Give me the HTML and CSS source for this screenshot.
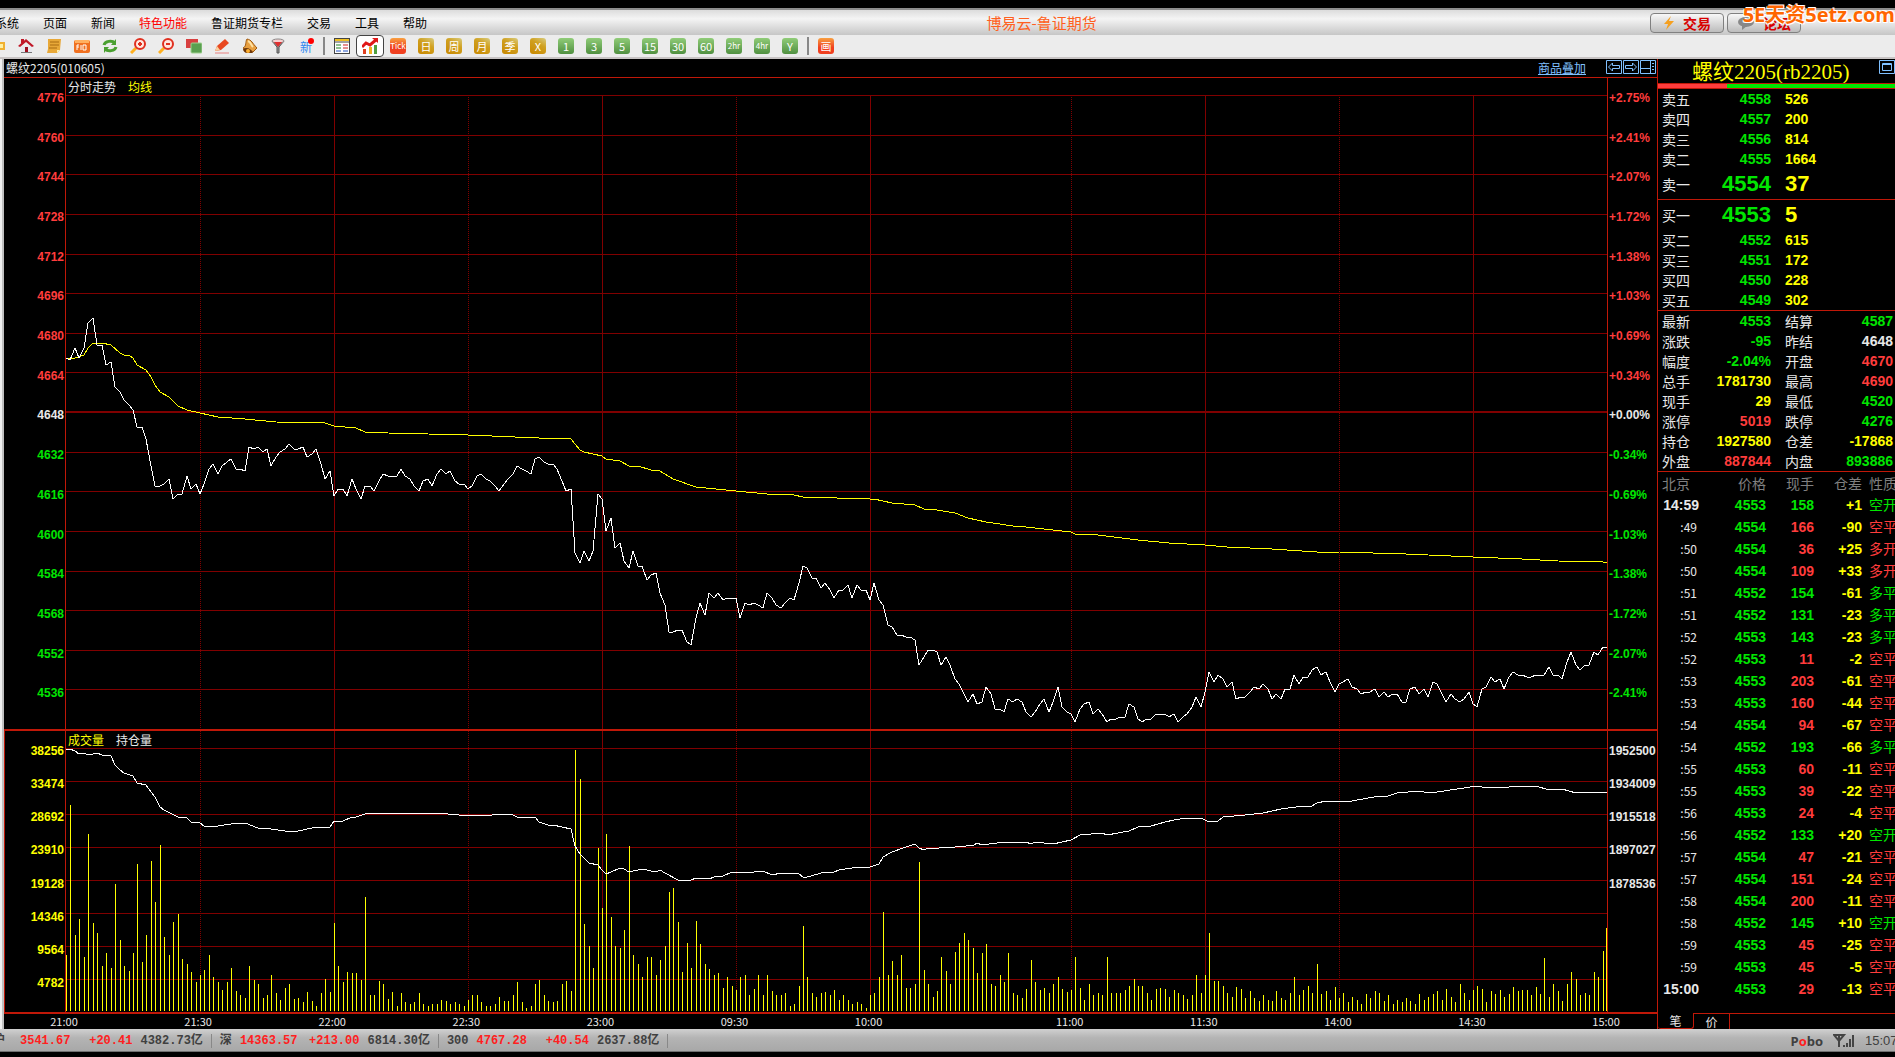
FILE: index.html
```html
<!DOCTYPE html>
<html lang="zh-CN">
<head>
  <meta charset="UTF-8">
  <meta name="viewport" content="width=device-width, initial-scale=1.0">
  <title>博易云-鲁证期货</title>
  <link rel="stylesheet" href="styles.css">
</head>
<body>
  <header class="menubar">
    <nav class="menu">
      <a href="#">系统</a>
      <a href="#">页面</a>
      <a href="#">新闻</a>
      <a href="#" class="hot">特色功能</a>
      <a href="#">鲁证期货专栏</a>
      <a href="#">交易</a>
      <a href="#">工具</a>
      <a href="#">帮助</a>
    </nav>
    <h1>博易云-鲁证期货</h1>
    <div class="menu-buttons">
      <button type="button">
        <svg width="12" height="16" viewBox="0 0 12 16"><path d="M8 1 1 9h4l-2 6 8-9H6z" fill="#f5a020"/></svg>
        交易
      </button>
      <button type="button">
        <svg width="18" height="14" viewBox="0 0 18 14"><ellipse cx="9" cy="6" rx="8" ry="5" fill="#888"/><path d="M5 9v5l5-4z" fill="#888"/></svg>
        论坛
      </button>
      <span class="watermark">5E天资5etz.com</span>
    </div>
  </header>

  <div class="toolbar">
    <button type="button" aria-label="打开"><svg viewBox="0 0 16 16"><path d="M1 4h14v8H1z" fill="#f0b030"/><path d="M2 6h11v4H2z" fill="#fff0a0"/></svg></button>
    <button type="button" aria-label="首页"><svg viewBox="0 0 16 16"><path d="M3 8h11v7H3z" fill="#e8e8ee"/><path d="M0 8 8 1l8 7-2 1-6-5-6 5z" fill="#c01828"/><path d="M3 1h3v4H3z" fill="#c01828"/><path d="M7 9h3v6H7z" fill="#a01020"/><path d="M3 14h11v1H3z" fill="#777"/></svg></button>
    <button type="button" aria-label="资讯"><svg viewBox="0 0 16 16"><path d="M2 1h13l-1 11-3 3H1l1-4z" fill="#e8a838"/><path d="M4 4h9M4 7h9M3 10h8" stroke="#a86a10"/><path d="m11 15 0-3 3 0z" fill="#fff0b0"/></svg></button>
    <button type="button" aria-label="F10"><svg viewBox="0 0 16 16"><rect x="0" y="2" width="16" height="13" rx="2" fill="#f07020"/><path d="M1 2h14v3H1z" fill="#ffb060"/><path d="M3 12V7h2M3 9h2M7 7v5M9 7h3v5H9z" stroke="#fff" fill="none"/></svg></button>
    <button type="button" aria-label="刷新"><svg viewBox="0 0 16 16"><path d="M2 7c1-4 8-5 11-2M14 9c-1 4-8 5-11 2" fill="none" stroke="#4aa030" stroke-width="3"/><path d="M14 1v6H9zM2 15V9h5z" fill="#4aa030"/></svg></button>
    <button type="button" aria-label="放大"><svg viewBox="0 0 16 16"><path d="M1 15l5-5" stroke="#ffb020" stroke-width="3"/><circle cx="10" cy="6" r="5" fill="#ffe8e0" stroke="#e03020" stroke-width="2"/><path d="M8 6h4M10 4v4" stroke="#e03020" stroke-width="2"/></svg></button>
    <button type="button" aria-label="缩小"><svg viewBox="0 0 16 16"><path d="M1 15l5-5" stroke="#ffb020" stroke-width="3"/><circle cx="10" cy="6" r="5" fill="#ffe8e0" stroke="#e03020" stroke-width="2"/><path d="M8 6h4" stroke="#e03020" stroke-width="2"/></svg></button>
    <button type="button" aria-label="叠加"><svg viewBox="0 0 16 16"><rect x="0" y="1" width="12" height="9" fill="#d84040"/><rect x="5" y="5" width="11" height="10" rx="1" fill="#5aa050" stroke="#a0d090"/></svg></button>
    <button type="button" aria-label="画线"><svg viewBox="0 0 16 16"><path d="m1 13 2-5 8-7 4 4-8 7z" fill="#e84820"/><path d="m1 13 2-5 3 4z" fill="#f8d0a0"/><path d="M1 15h14" stroke="#e88080"/></svg></button>
    <button type="button" aria-label="预警"><svg viewBox="0 0 16 16"><path d="M5 1c5 1 5 4 10 9l-4 4C8 11 2 12 1 10c4-2 2-6 4-9z" fill="#e8a040" stroke="#a05a10"/><path d="M6 3c3 1 3 4 5 6" fill="none" stroke="#ffe0a0" stroke-width="2"/><path d="M1 11c3-2 8-1 10 4H5c-2 0-4-2-4-4z" fill="#703808"/><circle cx="6" cy="13" r="2" fill="#ffb030"/></svg></button>
    <button type="button" aria-label="筛选"><svg viewBox="0 0 16 16"><path d="M2 3h12l-5 6v6H7V9z" fill="#999" stroke="#555"/><ellipse cx="8" cy="3" rx="6" ry="2" fill="#f8d0d0" stroke="#888"/><path d="M4 4h8L8 9z" fill="#e03030"/></svg></button>
    <button type="button" class="new">新<span class="dot"></span></button>
    <span class="sep"></span>
    <button type="button" aria-label="报价"><svg viewBox="0 0 16 16"><rect x="0.5" y="0.5" width="15" height="15" fill="#fff" stroke="#444"/><path d="M1 2h14" stroke="#f0c020" stroke-width="2"/><path d="M1 4h14" stroke="#444"/><path d="M2 7h5M2 10h5" stroke="#208020"/><path d="M2 13h5M9 13h5" stroke="#2050c0"/><path d="M9 7h5M9 10h5" stroke="#d02020"/></svg></button>
    <button type="button" class="active" aria-label="分时"><svg viewBox="0 0 16 16"><path d="M1 11h3v5H1z" fill="#e04020"/><path d="M7 9h3v7H7z" fill="#f0b020"/><path d="M12 7h3v9h-3z" fill="#50a040"/><path d="m0 9 4-4 4 2 7-6" fill="none" stroke="#e01818" stroke-width="3"/><path d="M10 0h6v5z" fill="#e01818"/></svg></button>
    <button type="button"><span class="chip red small">Tick</span></button>
    <button type="button"><span class="chip gold">日</span></button>
    <button type="button"><span class="chip gold">周</span></button>
    <button type="button"><span class="chip gold">月</span></button>
    <button type="button"><span class="chip gold">季</span></button>
    <button type="button"><span class="chip gold">X</span></button>
    <button type="button"><span class="chip green">1</span></button>
    <button type="button"><span class="chip green">3</span></button>
    <button type="button"><span class="chip green">5</span></button>
    <button type="button"><span class="chip green">15</span></button>
    <button type="button"><span class="chip green">30</span></button>
    <button type="button"><span class="chip green">60</span></button>
    <button type="button"><span class="chip green small">2hr</span></button>
    <button type="button"><span class="chip green small">4hr</span></button>
    <button type="button"><span class="chip green">Y</span></button>
    <span class="sep"></span>
    <button type="button"><span class="chip red">画</span></button>
  </div>

  <main>
    <div class="dock"></div>

    <section class="chart">
      <div class="chart-title">
        <span>螺纹2205(010605)</span>
        <a href="#" class="overlay-link">商品叠加</a>
        <button type="button" aria-label="向左"><svg viewBox="0 0 16 14"><path d="M.5 .5h15v13H.5zM2.500 7l4-4v2.500h7v3h-7V11z"/></svg></button>
        <button type="button" aria-label="向右"><svg viewBox="0 0 16 14"><path d="M.5 .5h15v13H.5zM13.500 7l-4-4v2.500h-7v3h7V11z"/></svg></button>
        <button type="button" aria-label="布局"><svg viewBox="0 0 16 14"><path d="M.5 .5h15v13H.5zM.5 8.500h10M10.500 .5v13M12 3.500h2M12 6.500h2M12 9.500h2"/></svg></button>
      </div>

      <div class="pane price-pane">
        <div class="axis left" id="priceAxis"></div>
        <div class="plot">
          <svg id="pricePlot"></svg>
          <div class="legend"><span>分时走势</span><span class="yellow">均线</span></div>
        </div>
        <div class="axis right" id="percentAxis"></div>
      </div>

      <div class="pane volume-pane">
        <div class="axis left yellow" id="volumeAxis"></div>
        <div class="plot">
          <svg id="volumePlot"></svg>
          <div class="legend"><span class="yellow">成交量</span><span>持仓量</span></div>
        </div>
        <div class="axis right" id="holdAxis"></div>
      </div>

      <div class="times" id="times"></div>
    </section>

    <aside class="panel">
      <div class="panel-title">
        <h2>螺纹2205(rb2205)</h2>
        <button type="button" aria-label="窗口"><svg viewBox="0 0 16 14"><path d="M.5 .5h15v13H.5zM3.500 3.500h9v7h-9zM3.500 4.500h9"/></svg></button>
      </div>
      <div class="ratio"><div class="ratio-buy"></div></div>

      <table class="depth">
        <tr><th>卖五</th><td>4558</td><td>526</td></tr>
        <tr><th>卖四</th><td>4557</td><td>200</td></tr>
        <tr><th>卖三</th><td>4556</td><td>814</td></tr>
        <tr><th>卖二</th><td>4555</td><td>1664</td></tr>
        <tr class="best"><th>卖一</th><td>4554</td><td>37</td></tr>
      </table>
      <table class="depth">
        <tr class="best"><th>买一</th><td>4553</td><td>5</td></tr>
        <tr><th>买二</th><td>4552</td><td>615</td></tr>
        <tr><th>买三</th><td>4551</td><td>172</td></tr>
        <tr><th>买四</th><td>4550</td><td>228</td></tr>
        <tr><th>买五</th><td>4549</td><td>302</td></tr>
      </table>
      <table class="quote">
        <tr><th>最新</th><td class="down">4553</td><th>结算</th><td class="down">4587</td></tr>
        <tr><th>涨跌</th><td class="down">-95</td><th>昨结</th><td>4648</td></tr>
        <tr><th>幅度</th><td class="down">-2.04%</td><th>开盘</th><td class="up">4670</td></tr>
        <tr><th>总手</th><td class="yellow">1781730</td><th>最高</th><td class="up">4690</td></tr>
        <tr><th>现手</th><td class="yellow">29</td><th>最低</th><td class="down">4520</td></tr>
        <tr><th>涨停</th><td class="up">5019</td><th>跌停</th><td class="down">4276</td></tr>
        <tr><th>持仓</th><td class="yellow">1927580</td><th>仓差</th><td class="yellow">-17868</td></tr>
        <tr><th>外盘</th><td class="up">887844</td><th>内盘</th><td class="down">893886</td></tr>
      </table>
      <table class="ticks">
        <thead>
          <tr><th>北京</th><th>价格</th><th>现手</th><th>仓差</th><th>性质</th></tr>
        </thead>
        <tbody id="ticks"></tbody>
      </table>
      <div class="tabs">
        <button type="button" class="active">笔</button>
        <button type="button">价</button>
      </div>
    </aside>
  </main>

  <footer class="status">
    <div class="index first"><span class="name">沪</span><span class="last">3541.67</span><span class="change">+20.41</span><span>4382.73亿</span></div>
    <div class="index"><span class="name">深</span><span class="last">14363.57</span><span class="change">+213.00</span><span>6814.30亿</span></div>
    <div class="index"><span class="name">300</span><span class="last">4767.28</span><span class="change">+40.54</span><span>2637.88亿</span></div>
    <div class="brand">P<em>o</em>bo</div>
    <svg class="signal" viewBox="0 0 22 14"><path d="M1 1h10L6 7zM6 1v12" fill="none" stroke="#444" stroke-width="2"/><path d="M10 11h2v2h-2zM13 9h2v4h-2zM16 5h2v8h-2zM19 1h2v12h-2z" fill="#444"/></svg>
    <div class="clock">15:07</div>
  </footer>

  <script src="chart.js"></script>
</body>
</html>
```
FILE: styles.css
```css
* {
  box-sizing: border-box;
}
body {
  margin: 0;
  height: 100vh;
  display: flex;
  flex-direction: column;
  padding: 8px 0 5px;
  overflow: hidden;
  background: #000;
  color: #e8e8e8;
  font-family: "Noto Sans CJK SC", sans-serif;
  font-size: 12px;
}
button {
  font: inherit;
  padding: 0;
  border: 0;
  background: none;
  cursor: pointer;
}
table {
  width: 100%;
  table-layout: fixed;
  border-collapse: collapse;
}
th, td {
  padding: 0;
}
.yellow { color: #ffff00; }
.up { color: #ff3c3c; }
.down { color: #00e600; }

/* menu bar */
.menubar {
  display: flex;
  align-items: center;
  flex: none;
  height: 27px;
  border-top: 2px solid #8c8c8c;
  background: linear-gradient(#dcdcdc, #f4f4f4 35%, #c6c6c6);
}
.menu {
  display: flex;
  gap: 24px;
  margin-left: -5px;
}
.menu a {
  color: #000;
  text-decoration: none;
}
.menu .hot {
  color: #ff0000;
}
.menubar h1 {
  flex: 1;
  margin: 0;
  padding-left: 6px;
  text-align: center;
  font-size: 15px;
  line-height: 20px;
  font-weight: normal;
  color: #ff6020;
}
.menu-buttons {
  position: relative;
  display: flex;
  gap: 3px;
  width: 245px;
}
.menu-buttons button {
  display: flex;
  align-items: center;
  justify-content: center;
  gap: 8px;
  width: 74px;
  height: 20px;
  border: 1px solid #808080;
  border-radius: 4px;
  background: linear-gradient(#f8f8f8, #bcbcbc);
  color: #d80000;
  font-size: 14px;
  font-weight: bold;
}
.watermark {
  position: absolute;
  right: 0;
  top: -12px;
  font: bold 20px/28px "Open Sans", "Noto Sans CJK SC", sans-serif;
  color: #ff6600;
  white-space: nowrap;
  text-shadow: 1px 1px 0 #fff, -1px 1px 0 #fff, 1px -1px 0 #fff;
}

/* toolbar */
.toolbar {
  display: flex;
  flex: none;
  height: 24px;
  margin-left: -16px;
  background: #ececec;
  border-bottom: 2px solid #c8c4c4;
}
.toolbar button {
  display: flex;
  align-items: center;
  justify-content: center;
  flex: none;
  width: 28px;
}
.toolbar svg {
  width: 16px;
  height: 16px;
}
.toolbar .active {
  border: 1px solid #444;
  border-radius: 4px;
  background: #fff;
}
.toolbar .new {
  position: relative;
  color: #3088f0;
}
.dot {
  position: absolute;
  right: 6px;
  top: 3px;
  width: 6px;
  height: 6px;
  border-radius: 50%;
  background: #ff0000;
}
.sep {
  width: 2px;
  margin: 2px 3px;
  background: #888;
}
.chip {
  width: 16px;
  height: 16px;
  border-radius: 3px;
  color: #fff;
  font-size: 11px;
  line-height: 16px;
  text-align: center;
}
.chip.small {
  font-size: 8px;
}
.gold { background: linear-gradient(30deg, #c88800, #d0a020 60%, #d8cc80); }
.green { background: linear-gradient(#90cc78, #509040); }
.red { background: linear-gradient(#f8a040, #f04020 60%); }

main {
  flex: 1;
  min-height: 0;
  display: grid;
  grid-template-columns: 4px 1fr 238px;
}
.dock {
  background: linear-gradient(90deg, #f0f0f0 50%, #c0c0c0 50%);
}

/* charts */
.chart {
  display: flex;
  flex-direction: column;
  min-width: 0;
  min-height: 0;
}
.chart-title {
  display: flex;
  align-items: center;
  flex: none;
  height: 19px;
  padding: 0 1px 2px 2px;
  border-bottom: 1px solid #c01808;
}
.overlay-link {
  margin-left: auto;
  margin-right: 19px;
  color: #80c0ff;
}
.chart-title button, .panel-title button {
  width: 16px;
  height: 14px;
  margin-left: 1px;
}
.chart-title svg, .panel-title svg {
  display: block;
  fill: none;
  stroke: #80c0ff;
}
.pane {
  display: grid;
  grid-template-columns: 62px 1fr 50px;
  min-height: 0;
}
.price-pane {
  flex: 654;
  border-bottom: 2px solid #c01808;
}
.volume-pane {
  flex: 282;
  border-left: 1px solid #c01808;
  border-bottom: 2px solid #c01808;
  grid-template-columns: 61px 1fr 50px;
}
.axis {
  display: flex;
  flex-direction: column;
  font: bold 12px/14px "Liberation Sans", sans-serif;
}
.axis span {
  flex: 1;
  display: flex;
  align-items: center;
}
.axis.left {
  text-align: right;
  border-right: 1px solid #c01808;
}
.axis.left span {
  justify-content: flex-end;
  padding-right: 1px;
}
.axis.right {
  border-left: 1px solid #c01808;
}
.axis.right span {
  padding-left: 1px;
}
.price-pane .axis {
  padding-bottom: 16px;
}
.volume-pane .axis {
  padding: 3px 0 12px;
}
.plot {
  position: relative;
  min-width: 0;
  min-height: 0;
  overflow: hidden;
}
.plot svg {
  position: absolute;
  width: 100%;
  height: 100%;
  shape-rendering: crispEdges;
}
.plot polyline {
  fill: none;
  stroke: #fff;
}
.plot .average, .plot .bars {
  fill: none;
  stroke: #ffff00;
}
.plot .grid {
  stroke: #800000;
}
.plot .base {
  stroke-width: 2px;
}
.plot .half {
  stroke-dasharray: 1 1;
}
.legend {
  position: relative;
  display: flex;
  gap: 12px;
  padding-left: 2px;
  line-height: 17px;
}
.times {
  display: flex;
  flex: none;
  height: 15px;
  padding: 0 51px 0 60px;
  font-size: 11px;
  line-height: 15px;
}
.times span {
  width: 0;
  display: flex;
  justify-content: center;
}

/* quote panel */
.panel {
  display: flex;
  flex-direction: column;
  min-width: 0;
  overflow: hidden;
  border-left: 1px solid #c01808;
}
.panel-title {
  display: flex;
  justify-content: space-between;
  flex: none;
  height: 24px;
  padding: 1px 0 0 34px;
}
.panel-title h2 {
  margin: 0;
  font: 21px/24px "Liberation Serif", "Noto Sans CJK SC", serif;
  color: #ffff00;
}
.ratio {
  flex: none;
  height: 6px;
  border-top: 1px solid #c01808;
  border-bottom: 1px solid #c01808;
  background: #00e600;
}
.ratio-buy {
  width: 29%;
  height: 4px;
  background: #ff3c3c;
}
.panel table {
  flex: none;
  font: bold 14px/20px "Liberation Sans", "Noto Sans CJK SC", sans-serif;
}
.panel th {
  font: 14px/20px "Noto Sans CJK SC", sans-serif;
  text-align: left;
  white-space: nowrap;
}
.panel tr {
  height: 20px;
}
.depth, .quote {
  border-bottom: 1px solid #c01808;
}
.depth th, .quote th:first-child {
  width: 48px;
  padding-left: 4px;
}
.depth td:nth-child(2) {
  width: 65px;
  text-align: right;
  color: #00e600;
}
.depth td:nth-child(3) {
  padding-left: 14px;
  color: #ffff00;
}
.panel .best {
  height: 30px;
}
.best td {
  font-size: 22px;
}
.quote td {
  text-align: right;
}
.quote td:nth-child(2) {
  width: 65px;
}
.quote th:nth-child(3) {
  width: 48px;
  padding-left: 14px;
}
.quote td:nth-child(4) {
  padding-right: 2px;
}
.ticks tr {
  height: 22px;
}
.ticks th, .ticks td {
  width: 48px;
  text-align: right;
}
.ticks th {
  color: #808080;
}
.ticks th:first-child {
  width: 41px;
  padding-left: 4px;
  text-align: left;
}
.ticks th:nth-child(2) {
  width: 67px;
}
.ticks th:nth-child(5), .ticks td:nth-child(5) {
  width: 34px;
  padding-left: 7px;
  text-align: left;
  font-weight: normal;
  white-space: nowrap;
}
.ticks .second {
  padding-right: 2px;
  font: 12px/20px "Noto Sans CJK SC", sans-serif;
}
.tabs {
  display: flex;
  flex: none;
  margin-top: auto;
  height: 16px;
}
.tabs::after {
  content: "";
  flex: 1;
  border-top: 1px solid #c01808;
}
.tabs button {
  width: 36px;
  border-top: 1px solid #c01808;
  border-right: 1px solid #c01808;
  color: #e8e8e8;
  line-height: 14px;
}
.tabs .active {
  border-top: 0;
  border-bottom: 1px solid #c01808;
  border-radius: 0 0 3px 3px;
}

/* status bar */
.status {
  display: flex;
  align-items: center;
  flex: none;
  height: 23px;
  padding-top: 2px;
  border-bottom: 1px solid #707070;
  background: linear-gradient(#d0d0d0, #b4b4b4 40%, #a8a8a8);
  color: #404040;
  font: bold 12px/20px "Liberation Mono", "Noto Sans CJK SC", monospace;
}
.index {
  display: flex;
  padding: 0 8px;
  border-right: 1px solid #888;
  line-height: 14px;
}
.index.first {
  padding-left: 0;
  margin-left: -7px;
}
.name {
  min-width: 12px;
  margin-right: 8px;
}
.first .name {
  margin-right: 15px;
}
.last, .change {
  color: #ff2020;
}
.change {
  width: 62px;
  margin-right: 8px;
  text-align: right;
}
.brand {
  margin-left: auto;
  font-family: "Open Sans", sans-serif;
  font-size: 13px;
}
.brand em {
  font-style: normal;
  color: #ff2020;
}
.signal {
  width: 22px;
  height: 14px;
  margin: 0 10px;
}
.clock {
  width: 30px;
  overflow: hidden;
  font: 13px/20px "Liberation Sans", sans-serif;
}
```
FILE: chart.js
```javascript
// one price per traded minute, 21:00 to 15:00
const prices = [
  4670,4669,4674,4670,4674,4684,4686,4675,4675,4667,4668,4658,4656,4653,4651,4649,4642,4642,4637,4626,
  4618,4618,4619,4621,4613,4615,4615,4622,4617,4619,4615,4619,4625,4627,4623,4626,4628,4629,4625,4625,
  4624,4634,4633,4634,4632,4633,4626,4630,4632,4633,4635,4633,4633,4634,4630,4631,4633,4627,4621,4624,
  4614,4617,4617,4614,4621,4617,4613,4618,4618,4616,4620,4623,4622,4622,4622,4625,4622,4621,4618,4616,
  4620,4621,4618,4623,4625,4623,4624,4620,4619,4619,4617,4618,4622,4623,4621,4620,4618,4616,4619,4621,
  4623,4626,4625,4624,4623,4629,4630,4628,4627,4627,4625,4620,4616,4617,4591,4587,4592,4588,4592,4615,
  4613,4600,4605,4593,4595,4588,4585,4592,4586,4586,4580,4582,4583,4575,4570,4559,4559,4560,4560,4555,
  4554,4565,4571,4566,4575,4573,4575,4572,4573,4573,4573,4565,4571,4570,4571,4570,4569,4575,4573,4570,
  4569,4571,4573,4572,4579,4586,4585,4581,4581,4577,4579,4576,4573,4576,4576,4578,4573,4578,4576,4576,
  4572,4579,4572,4570,4562,4561,4558,4558,4557,4557,4556,4546,4549,4552,4552,4551,4546,4549,4546,4540,
  4538,4534,4531,4534,4530,4531,4537,4534,4528,4528,4527,4532,4531,4532,4531,4527,4525,4527,4530,4532,
  4527,4531,4537,4529,4527,4526,4523,4528,4530,4531,4526,4528,4526,4523,4524,4524,4525,4525,4530,4529,
  4524,4523,4524,4524,4526,4526,4526,4525,4526,4523,4525,4526,4529,4533,4529,4535,4543,4539,4542,4540,
  4537,4539,4532,4533,4533,4535,4537,4536,4538,4536,4532,4534,4532,4536,4536,4542,4538,4541,4541,4544,
  4545,4542,4543,4539,4535,4538,4539,4540,4537,4536,4534,4535,4535,4536,4533,4535,4533,4534,4534,4531,
  4531,4536,4537,4534,4536,4533,4539,4538,4534,4531,4534,4532,4531,4532,4535,4530,4529,4536,4537,4541,
  4539,4540,4536,4541,4543,4542,4542,4541,4541,4542,4542,4542,4545,4542,4542,4540,4547,4551,4546,4544,
  4546,4546,4551,4550,4553,4553
];

// [minute, average price]
const averages = [
  [0,4670],[2,4670],[4,4671],[5,4674],[6,4676],[8,4676],[10,4675],[12,4672],[13,4671],[14,4671],[15,4670],
  [16,4667],[18,4665],[19,4662],[20,4659],[21,4656],[23,4654],[25,4650.5],[27,4649],[30,4647.7],[34,4646],
  [40,4645],[47,4644.1],[58,4643.7],[60,4642.4],[65,4641.4],[67,4640],[72,4639.4],[90,4638.6],[106,4637.6],
  [111,4637.5],[113,4637],[114,4635.2],[115,4632.7],[116,4632],[120,4630.3],[121,4629.2],[124,4628.4],
  [126,4626],[128,4626],[131,4624.7],[133,4624.3],[136,4621],[141,4617.7],[150,4616.1],[157,4615],
  [163,4614.5],[165,4613.8],[180,4613],[181,4613],[185,4611.4],[190,4610.5],[192,4609],[195,4608.5],
  [199,4607.4],[202,4605.1],[206,4603.5],[212,4602],[215,4601.6],[219,4600.7],[225,4599.6],[226,4598.8],
  [231,4598.3],[240,4596.4],[247,4595.2],[255,4594.4],[260,4593.4],[270,4592.7],[280,4591.5],[285,4591.3],
  [300,4590.5],[315,4589.6],[326,4588.7],[334,4588],[344,4587.4],[345,4587]
];

// volume per minute, in hundreds of lots
const volumes = [
  82,300,112,135,79,258,129,114,66,86,64,186,105,66,60,86,215,73,112,219,160,242,108,82,131,142,77,69,58,44,
  53,61,83,51,44,32,43,64,31,25,21,66,47,40,21,25,54,28,18,35,40,19,21,15,29,16,8,27,48,29,
  129,66,43,58,56,57,47,166,25,24,45,41,19,29,8,27,15,12,14,27,11,9,11,12,18,16,11,14,12,9,
  18,25,24,14,8,8,11,22,16,16,25,44,15,6,8,41,47,24,16,14,16,40,45,31,379,337,127,95,64,237,
  150,258,138,96,93,119,241,83,69,51,80,79,53,76,95,174,179,131,58,100,64,132,99,69,63,53,56,35,50,37,
  32,51,54,25,34,54,25,54,31,24,25,27,9,11,38,125,51,27,22,27,29,24,32,18,25,18,11,15,11,6,
  25,28,51,145,54,74,54,83,35,35,40,218,61,41,22,31,80,60,41,87,100,114,105,93,56,85,98,41,38,53,
  43,85,27,24,21,34,76,44,32,35,27,40,50,34,29,32,79,35,18,41,25,28,25,79,28,27,28,32,37,48,
  38,37,27,18,34,35,34,22,32,27,25,19,25,54,27,54,115,45,45,38,28,22,36,33,20,30,20,16,24,18,
  16,30,20,18,28,50,24,32,38,28,70,26,30,18,36,20,28,14,22,18,12,26,20,30,28,16,24,12,18,14,
  20,16,12,26,18,22,26,30,18,34,22,14,40,28,18,32,38,34,14,30,26,32,22,26,36,30,32,32,24,36,
  26,78,22,40,30,16,40,58,48,25,28,25,58,50,89,122
];

// [minute, open interest in thousands]
const holdings = [
  [0,1951.4],[1,1952.1],[2,1950.6],[3,1949.3],[4,1949.7],[5,1948.4],[6,1949.1],[7,1949.7],[8,1948.8],
  [9,1948.8],[10,1948.2],[11,1943.2],[12,1940],[13,1938.7],[15,1936.8],[16,1933.1],[18,1931.8],[20,1924.9],
  [21,1919.4],[22,1917.6],[25,1913.6],[27,1913.1],[28,1911.2],[30,1910.3],[31,1909],[34,1909],[37,1910.1],
  [40,1910.5],[43,1907.5],[46,1907.1],[49,1906.2],[52,1906.2],[55,1907.7],[59,1908.4],[60,1911.6],
  [62,1911.4],[64,1914],[65,1913.6],[67,1915.5],[72,1915.9],[76,1916.3],[83,1916.3],[88,1915.1],
  [93,1914.6],[98,1915.7],[100,1914.8],[101,1914],[105,1913.6],[106,1911],[108,1909.6],[109,1909.2],
  [113,1906.9],[114,1897.6],[115,1892.9],[116,1890.9],[117,1888.2],[119,1887.1],[120,1884.1],[121,1882.1],
  [122,1882.8],[124,1885.4],[125,1884.7],[126,1883.2],[129,1884.9],[132,1883.2],[133,1884.3],[134,1882.6],
  [137,1878.7],[140,1878.7],[141,1879.8],[144,1879.3],[145,1880.4],[147,1880.9],[149,1883.2],[154,1882.8],
  [155,1883.8],[156,1883.8],[158,1881.5],[160,1882.6],[164,1882.1],[165,1880.4],[166,1880.4],[170,1883.2],
  [172,1883.2],[173,1884.3],[176,1885.4],[180,1886],[182,1887.7],[183,1891.2],[185,1894.2],[188,1896.8],
  [190,1898.9],[191,1896.3],[192,1895.5],[193,1896.6],[195,1896.1],[196,1897.2],[199,1896.8],[200,1897.8],
  [201,1897.2],[202,1898.3],[203,1897.8],[204,1899.3],[205,1898.3],[210,1900],[211,1899.4],[215,1900],
  [216,1898.9],[217,1900],[221,1898.9],[225,1901.1],[227,1903.9],[232,1904.9],[233,1903.9],[238,1906],
  [240,1908.2],[243,1908.6],[246,1911.2],[248,1912.1],[251,1913.5],[254,1913.3],[256,1911],[258,1911.8],
  [259,1913.8],[264,1915],[268,1915.9],[272,1918.1],[277,1920],[279,1920],[280,1921.5],[282,1922.8],
  [284,1922.2],[288,1922.8],[294,1925.6],[296,1925.6],[298,1927.1],[303,1928.2],[304,1927.6],[307,1927.6],
  [313,1929.9],[316,1931.2],[317,1930.6],[323,1930.6],[324,1931.2],[329,1931.2],[332,1929],[335,1929.5],
  [338,1927.3],[340,1927.6],[341,1927.1],[343,1927.6],[345,1927.3]
];

// [time, price, lots, change in open interest, kind, direction]
const trades = [
  ["14:59", 4553, 158, "+1", "空开", "down"],
  [":49", 4554, 166, "-90", "空平", "up"],
  [":50", 4554, 36, "+25", "多开", "up"],
  [":50", 4554, 109, "+33", "多开", "up"],
  [":51", 4552, 154, "-61", "多平", "down"],
  [":51", 4552, 131, "-23", "多平", "down"],
  [":52", 4553, 143, "-23", "多平", "down"],
  [":52", 4553, 11, "-2", "空平", "up"],
  [":53", 4553, 203, "-61", "空平", "up"],
  [":53", 4553, 160, "-44", "空平", "up"],
  [":54", 4554, 94, "-67", "空平", "up"],
  [":54", 4552, 193, "-66", "多平", "down"],
  [":55", 4553, 60, "-11", "空平", "up"],
  [":55", 4553, 39, "-22", "空平", "up"],
  [":56", 4553, 24, "-4", "空平", "up"],
  [":56", 4552, 133, "+20", "空开", "down"],
  [":57", 4554, 47, "-21", "空平", "up"],
  [":57", 4554, 151, "-24", "空平", "up"],
  [":58", 4554, 200, "-11", "空平", "up"],
  [":58", 4552, 145, "+10", "空开", "down"],
  [":59", 4553, 45, "-25", "空平", "up"],
  [":59", 4553, 45, "-5", "空平", "up"],
  ["15:00", 4553, 29, "-13", "空平", "up"]
];

const percents = ["+2.75%", "+2.41%", "+2.07%", "+1.72%", "+1.38%", "+1.03%", "+0.69%", "+0.34%", "+0.00%",
  "-0.34%", "-0.69%", "-1.03%", "-1.38%", "-1.72%", "-2.07%", "-2.41%"];
const times = [[0, "21:00"], [30, "21:30"], [60, "22:00"], [90, "22:30"], [120, "23:00"], [150, "09:30"],
  [180, "10:00"], [225, "11:00"], [255, "11:30"], [285, "14:00"], [315, "14:30"], [345, "15:00"]];
const halfHours = [30, 90, 150, 225, 285];
const MINUTES = 345;
const LEGEND = 17;

function tone(i) {
  return i < 8 ? "up" : i > 8 ? "down" : "";
}

function fillAxis(id, labels, toneOf) {
  document.getElementById(id).innerHTML = labels
    .map((label, i) => `<span class="${toneOf ? toneOf(i) : ""}">${label}</span>`).join("");
}

function drawGrid(w, h, rows, baseRow) {
  let out = "";
  for (let i = 0; i < rows; i++) {
    const y = Math.round(LEGEND + i * (h - LEGEND) / rows) + (i === baseRow ? 0 : 0.5);
    out += `<line class="grid ${i === baseRow ? "base" : ""}" x1="0" x2="${w}" y1="${y}" y2="${y}"/>`;
  }
  times.slice(1, -1).forEach(([m]) => {
    const x = Math.round(m * w / MINUTES) + 0.5;
    const top = baseRow === undefined ? 0 : LEGEND;
    out += `<line class="grid ${halfHours.includes(m) ? "half" : ""}" x1="${x}" x2="${x}" y1="${top}" y2="${h}"/>`;
  });
  return out;
}

function polyline(points, w, toY, name) {
  const list = points.map(([m, v]) => `${Math.round(m * w / MINUTES)},${Math.round(toY(v))}`);
  return `<polyline class="${name}" points="${list.join(" ")}"/>`;
}

function draw() {
  const price = document.getElementById("pricePlot");
  let w = price.clientWidth, h = price.clientHeight;
  const priceY = v => LEGEND + (4776 - v) * (h - LEGEND) / 256;
  price.innerHTML = drawGrid(w, h, 16, 8)
    + polyline(averages, w, priceY, "average")
    + polyline(prices.map((v, m) => [m, v]), w, priceY, "last-price");

  const volume = document.getElementById("volumePlot");
  w = volume.clientWidth;
  h = volume.clientHeight;
  const bars = volumes.map((v, m) => {
    const x = Math.min(Math.round(m * w / MINUTES), w - 1) + 0.5;
    return `M${x} ${h - 1}V${Math.round(h - v * (h - LEGEND) / 382.56)}`;
  });
  volume.innerHTML = drawGrid(w, h, 8)
    + `<path class="bars" d="${bars.join("")}"/>`
    + polyline(holdings, w, v => LEGEND + (1952.5 - v) * (h - LEGEND) / 147.93, "holding");
}

fillAxis("priceAxis", percents.map((p, i) => 4776 - i * 16), tone);
fillAxis("percentAxis", percents, tone);
fillAxis("volumeAxis", [38256, 33474, 28692, 23910, 19128, 14346, 9564, 4782]);
fillAxis("holdAxis", [1952500, 1934009, 1915518, 1897027, 1878536, "", "", ""]);

let previous = 0;
document.getElementById("times").innerHTML = times.map(([m, label]) => {
  const space = m - previous;
  previous = m;
  return `<i style="flex:${space}"></i><span>${label}</span>`;
}).join("");

document.getElementById("ticks").innerHTML = trades.map(([time, price, lots, change, kind, dir]) => `
  <tr>
    <td class="${time[0] === ":" ? "second" : ""}">${time}</td>
    <td class="down">${price}</td>
    <td class="${dir}">${lots}</td>
    <td class="yellow">${change}</td>
    <td class="${dir}">${kind}</td>
  </tr>`).join("");

draw();
window.addEventListener("resize", draw);
```
